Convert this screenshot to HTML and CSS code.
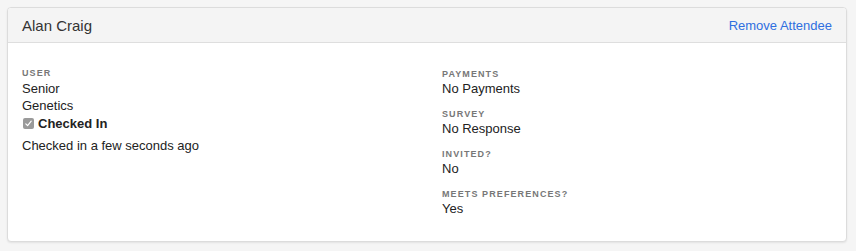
FILE: index.html
```html
<!DOCTYPE html>
<html>
<head>
<meta charset="utf-8">
<link rel="stylesheet" href="styles.css">
</head>
<body>
<div class="card">
  <div class="card-header">
    <span class="name">Alan Craig</span>
    <a class="action" href="#">Remove Attendee</a>
  </div>
  <div class="card-body">
    <div class="col">
      <div class="label">User</div>
      <div class="value">Senior</div>
      <div class="value">Genetics</div>
      <div class="checked">
        <span class="box"><svg width="9" height="9" viewBox="0 0 9 9"><path d="M1.8 4.8 L3.6 6.6 L7.2 2.2" fill="none" stroke="#fff" stroke-width="1.2" stroke-linecap="round" stroke-linejoin="round"/></svg></span>
        <span class="checked-text">Checked In</span>
      </div>
      <div class="value note">Checked in a few seconds ago</div>
    </div>
    <div class="col side">
      <div class="field">
        <div class="label">Payments</div>
        <div class="value">No Payments</div>
      </div>
      <div class="field">
        <div class="label">Survey</div>
        <div class="value">No Response</div>
      </div>
      <div class="field">
        <div class="label">Invited?</div>
        <div class="value">No</div>
      </div>
      <div class="field">
        <div class="label">Meets Preferences?</div>
        <div class="value">Yes</div>
      </div>
    </div>
  </div>
</div>
</body>
</html>
```
FILE: styles.css
```css
html, body {
  margin: 0;
  padding: 0;
  background: #f5f5f5;
}
body {
  padding: 7px 9px 9px 7px;
  font-family: "Liberation Sans", Arial, sans-serif;
  color: #222;
}
.card {
  background: #fff;
  border: 1px solid #dcdcdc;
  border-radius: 4px;
  box-shadow: 0 1px 2px rgba(0,0,0,0.08);
  height: 233px;
  overflow: hidden;
}
.card-header {
  display: flex;
  justify-content: space-between;
  align-items: center;
  height: 34px;
  padding: 0 14px;
  background: #f4f4f4;
  border-bottom: 1px solid #dedede;
}
.name {
  font-size: 15px;
  color: #333;
}
.action {
  font-size: 13px;
  color: #2f6fe0;
  text-decoration: none;
}
.card-body {
  display: grid;
  grid-template-columns: 1fr 1fr;
  column-gap: 30px;
  padding: 24px 14px 0 14px;
}
.label {
  font-size: 9px;
  font-weight: bold;
  letter-spacing: 1.1px;
  text-transform: uppercase;
  color: #777;
  line-height: 13px;
}
.value {
  font-size: 13px;
  line-height: 17px;
  color: #222;
}
.checked {
  display: flex;
  align-items: center;
  gap: 4px;
  height: 19px;
  margin-left: 1px;
}
.box {
  display: inline-flex;
  align-items: center;
  justify-content: center;
  width: 11px;
  height: 11px;
  background: #9a9a9a;
  border-radius: 2px;
}
.checked-text {
  font-size: 13px;
  font-weight: bold;
  color: #222;
}
.note {
  margin-top: 4px;
}
.side {
  padding-top: 1px;
}
.side .label {
  line-height: 12px;
}
.side .field {
  margin-bottom: 11px;
}
```
